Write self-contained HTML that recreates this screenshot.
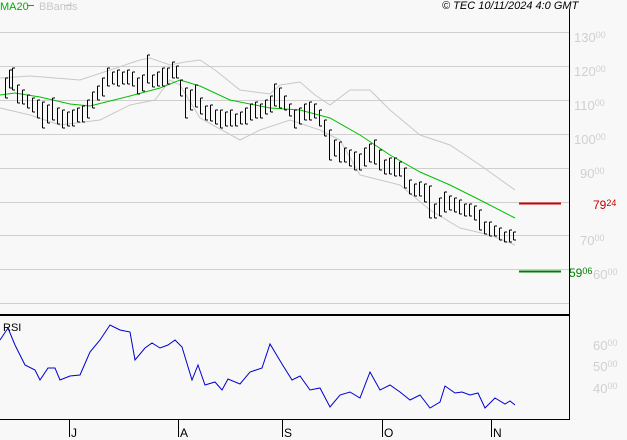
<!DOCTYPE html>
<html><head><style>
body{margin:0;background:#f8f8f8;width:627px;height:440px;overflow:hidden;font-family:"Liberation Sans",sans-serif}
</style></head><body>
<svg width="627" height="440" xmlns="http://www.w3.org/2000/svg" style="display:block">
<defs><marker id="t" markerUnits="userSpaceOnUse" markerWidth="4" markerHeight="2" refX="0" refY="1" orient="0" overflow="visible"><line x1="0" y1="1" x2="2.5" y2="1" stroke="#000"/></marker></defs>
<rect width="627" height="440" fill="#f8f8f8"/>
<g stroke="#cfcfcf" stroke-width="1">
<line x1="0" y1="32.5" x2="569" y2="32.5"/><line x1="0" y1="66.5" x2="569" y2="66.5"/><line x1="0" y1="100.5" x2="569" y2="100.5"/><line x1="0" y1="134.5" x2="569" y2="134.5"/><line x1="0" y1="168.5" x2="569" y2="168.5"/><line x1="0" y1="202.5" x2="569" y2="202.5"/><line x1="0" y1="235.5" x2="569" y2="235.5"/><line x1="0" y1="269.5" x2="569" y2="269.5"/><line x1="0" y1="303.5" x2="569" y2="303.5"/>
</g>
<line x1="569.5" y1="9" x2="569.5" y2="420" stroke="#000"/>
<line x1="0" y1="315" x2="570" y2="315" stroke="#000" stroke-width="2"/>
<line x1="0" y1="419.5" x2="570" y2="419.5" stroke="#000"/>
<g stroke="#000"><line x1="69.5" y1="419" x2="69.5" y2="437"/><line x1="178.5" y1="419" x2="178.5" y2="437"/><line x1="282.5" y1="419" x2="282.5" y2="437"/><line x1="382.5" y1="419" x2="382.5" y2="437"/><line x1="491.5" y1="419" x2="491.5" y2="437"/></g>
<g font-size="12" fill="#000"><text x="71" y="437">J</text><text x="180" y="437">A</text><text x="284" y="437">S</text><text x="384" y="437">O</text><text x="493" y="437">N</text></g>
<g fill="none" stroke="#c8c8c8"><polyline points="0,78 30,76 80,80 110,70 140,60 150,58 170,65 185,62 200,60 215,70 240,90 270,94 280,85 300,82 315,95 330,105 350,90 370,90 390,110 420,135 450,145 480,165 515,190"/><polyline points="0,108 30,115 60,125 100,120 130,105 155,100 170,80 180,85 200,118 240,140 260,130 290,120 320,130 340,140 360,175 380,180 400,185 430,210 460,228 490,235 515,245"/></g>
<polyline fill="none" stroke="#00c000" points="0,95 15,93 40,97 70,104 90,106 110,101 130,96 160,88 180,80 200,86 230,100 270,108 300,110 330,118 360,135 390,155 420,172 450,185 480,200 515,218"/>
<line x1="519" y1="203.5" x2="561" y2="203.5" stroke="#d00000" stroke-width="2"/>
<line x1="519" y1="271.5" x2="561" y2="271.5" stroke="#008000" stroke-width="2"/>
<g font-size="13" fill="#d0d0d0"><text x="574" y="42">130<tspan font-size="9" dy="-4">00</tspan></text><text x="574" y="76">120<tspan font-size="9" dy="-4">00</tspan></text><text x="574" y="110">110<tspan font-size="9" dy="-4">00</tspan></text><text x="574" y="144">100<tspan font-size="9" dy="-4">00</tspan></text><text x="580" y="178">90<tspan font-size="9" dy="-4">00</tspan></text><text x="580" y="245">70<tspan font-size="9" dy="-4">00</tspan></text><text x="593" y="279">60<tspan font-size="9" dy="-4">00</tspan></text><text x="593" y="350">60<tspan font-size="9" dy="-4">00</tspan></text><text x="593" y="371">50<tspan font-size="9" dy="-4">00</tspan></text><text x="593" y="393">40<tspan font-size="9" dy="-4">00</tspan></text></g>
<rect x="589" y="197" width="36" height="14" fill="#f8f8f8"/>
<text x="593" y="209" font-size="12" fill="#c00000">79<tspan font-size="9" dy="-3">24</tspan></text>
<text x="569" y="277" font-size="12" fill="#008000">59<tspan font-size="9" dy="-3">06</tspan></text>
<polyline fill="none" stroke="#0000d0" points="0,340 8,328 15,345 25,365 35,370 40,380 48,368 55,368 60,380 70,376 80,375 90,352 100,340 110,325 120,330 130,332 135,360 145,348 152,343 160,348 168,345 175,340 182,347 192,380 198,365 205,385 215,382 222,390 228,379 240,384 250,372 262,368 270,344 282,364 292,380 300,376 310,390 320,388 330,407 340,395 350,392 360,398 370,372 380,390 390,385 400,392 410,400 420,395 430,408 440,402 445,386 455,393 462,392 470,395 478,393 485,408 495,398 505,404 510,401 515,405"/>
<text x="3" y="331" font-size="11" fill="#000">RSI</text>
<text x="0" y="10" font-size="11" fill="#00b000">MA20</text><line x1="27" y1="5.5" x2="34" y2="5.5" stroke="#00b000"/>
<text x="39" y="10" font-size="11" fill="#c8c8c8">BBands</text><line x1="64" y1="5.5" x2="72" y2="5.5" stroke="#c8c8c8"/>
<text x="442" y="9" font-size="11" font-style="italic" fill="#000">© TEC 10/11/2024 4:0 GMT</text>
<g stroke="#000">
<path marker-start="url(#t)" marker-mid="url(#t)" marker-end="url(#t)" d="M5.5 78v20M9.5 70v18M12.5 68v22M17.5 85v18M22.5 90v14M27.5 95v13M32.5 98v14M37.5 100v18M42.5 102v26M47.5 105v18M52.5 98v22M57.5 108v16M62.5 110v18M67.5 112v14M72.5 110v16M77.5 108v14M82.5 106v16M87.5 100v18M92.5 92v16M97.5 86v14M102.5 78v18M107.5 68v18M112.5 72v12M117.5 70v16M122.5 72v12M127.5 70v14M132.5 72v14M137.5 78v16M142.5 75v16M147.5 55v28M152.5 75v12M157.5 72v14M162.5 68v18M167.5 68v16M172.5 62v16M176.5 66v12M180.5 80v16M185.5 88v30M190.5 90v20M195.5 85v22M200.5 98v16M205.5 106v14M210.5 105v16M215.5 110v14M220.5 110v18M225.5 112v14M230.5 110v16M235.5 114v12M240.5 112v12M245.5 108v16M250.5 104v16M255.5 102v16M260.5 104v14M265.5 100v14M270.5 96v16M274.5 84v22M279.5 88v20M284.5 96v14M289.5 104v12M294.5 110v18M299.5 108v16M304.5 104v16M309.5 102v18M314.5 104v14M319.5 110v16M324.5 120v16M329.5 130v30M334.5 140v16M339.5 142v20M344.5 148v14M349.5 150v16M354.5 152v18M359.5 154v16M364.5 148v18M369.5 144v18M374.5 140v24M379.5 150v20M384.5 160v14M389.5 158v16M394.5 158v18M399.5 162v14M404.5 168v20M409.5 180v14M414.5 184v12M419.5 182v14M424.5 184v18M429.5 186v32M434.5 204v14M439.5 198v18M444.5 192v20M449.5 196v14M454.5 198v14M459.5 200v14M464.5 204v12M469.5 204v12M474.5 206v14M479.5 210v20M484.5 222v12M489.5 222v14M494.5 226v10M499.5 228v12M504.5 232v10M509.5 230v12M513.5 232v8"/>
</g>
</svg>
</body></html>
